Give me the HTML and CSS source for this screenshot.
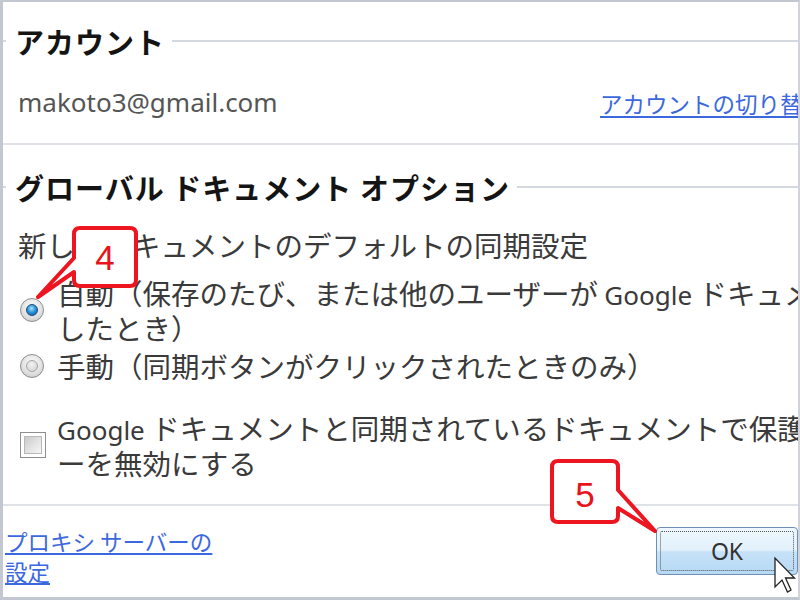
FILE: index.html
```html
<!DOCTYPE html>
<html lang="ja">
<head>
<meta charset="utf-8">
<title>オプション</title>
<link rel="stylesheet" href="styles.css">
</head>
<body>
<div class="frame">
  <div class="dialog">
    <section class="group">
      <h2 class="legend"><span class="legend-text">アカウント</span></h2>
      <div class="acct-row">
        <span class="email">makoto3@gmail.com</span>
        <a class="link" href="#">アカウントの切り替え</a>
      </div>
    </section>
    <hr class="divider">
    <section class="group">
      <h2 class="legend"><span class="legend-text">グローバル ドキュメント オプション</span></h2>
      <p class="desc">新しいドキュメントのデフォルトの同期設定</p>
      <div class="opt opt1"><span class="radio on"></span><span class="opt-text">自動（保存のたび、または他のユーザーが <span class="lat">Google</span> ドキュメントを編集<br>したとき）</span></div>
      <div class="opt opt2"><span class="radio"></span><span class="opt-text">手動（同期ボタンがクリックされたときのみ）</span></div>
      <div class="opt opt3"><span class="check"></span><span class="opt-text"><span class="lat">Google</span> ドキュメントと同期されているドキュメントで保護ビュ<br>ーを無効にする</span></div>
    </section>
    <hr class="divider">
    <footer class="foot">
      <a class="proxy" href="#">プロキシ サーバーの<br>設定</a>
      <button class="ok" type="button"><span class="ok-focus">OK</span></button>
    </footer>
  </div>
  <svg class="overlay" viewBox="0 0 800 600" width="800" height="600" aria-hidden="true">
    <path class="callout" d="M80,228 H130 Q136,228 136,234 V280 Q136,286 130,286 H80 Q74,286 74,280 V272 L38,297 L74,258 V234 Q74,228 80,228 Z"/>
    <text class="num" x="105" y="270">4</text>
    <path class="callout" d="M558,461 H612 Q618,461 618,467 V490 L655,531 L618,508 V516 Q618,522 612,522 H558 Q552,522 552,516 V467 Q552,461 558,461 Z"/>
    <text class="num" x="585" y="507">5</text>
    <polygon class="cursor" points="775,558 775,587 782,580 787.5,592 791,590 785.5,578 794.5,578"/>
  </svg>
</div>
</body>
</html>
```

FILE: styles.css
```css
html, body {
  margin: 0;
  padding: 0;
  background: #ffffff;
}

body {
  font-family: "Noto Sans CJK JP", "Noto Sans", sans-serif;
  color: #3a3a3a;
}

.frame {
  position: relative;
  width: 800px;
  height: 600px;
  box-sizing: border-box;
  border-top: 2px solid #c3c7d1;
  border-left: 3px solid #c3c7d1;
  border-bottom: 3px solid #c3c7d1;
  border-right: 2px solid #d0d3da;
  overflow: hidden;
  background: #ffffff;
}

.dialog {
  width: 795px;
  white-space: nowrap;
}

.legend {
  display: flex;
  align-items: center;
  margin: 21px 0 0;
  height: 36px;
  font-size: 29px;
  line-height: 36px;
  font-weight: 700;
  color: #141414;
  letter-spacing: 1px;
}

.legend::before {
  content: "";
  width: 3px;
  height: 2px;
  background: #d4d8df;
  margin-right: 9px;
  flex: none;
}

.legend::after {
  content: "";
  flex: 1;
  height: 2px;
  background: #d4d8df;
  margin-left: 7px;
}

.legend-text {
  flex: none;
}

.group:last-of-type .legend {
  margin-top: 24px;
}

.acct-row {
  display: grid;
  grid-template-columns: 582px auto;
  align-items: center;
  margin-top: 23px;
  height: 36px;
  padding-left: 15px;
}

.email {
  font-family: "Noto Sans", sans-serif;
  font-size: 26px;
  color: #555555;
  line-height: 36px;
}

.link {
  font-size: 22.5px;
  line-height: 36px;
  color: #3c68de;
  text-decoration: underline;
  text-underline-offset: 3px;
  padding-top: 3px;
}

.divider {
  margin: 25px 0 0;
  border: 0;
  height: 2px;
  background: #dfe2e7;
}

.desc {
  margin: 22px 0 0;
  padding-left: 15px;
  font-size: 28.5px;
  line-height: 35px;
  color: #3a3a3a;
}

.opt {
  display: flex;
  align-items: center;
  padding-left: 17px;
  gap: 13px;
  font-size: 28.5px;
  line-height: 35px;
}

.opt1 { margin-top: 13px; }
.opt2 { margin-top: 3px; }
.opt3 { margin-top: 27px; }

.lat {
  font-family: "Noto Sans", sans-serif;
  font-size: 26px;
  line-height: 1;
}

.radio {
  flex: none;
  width: 24px;
  height: 24px;
  box-sizing: border-box;
  border-radius: 50%;
  border: 1px solid #8c8c8c;
  background: radial-gradient(circle at 50% 35%, #fbfbfb 0, #e2e2e2 55%, #c4c4c4 100%);
  display: flex;
  align-items: center;
  justify-content: center;
}

.radio::after {
  content: "";
  width: 12px;
  height: 12px;
  box-sizing: border-box;
  border-radius: 50%;
  border: 1px solid #a6a6a6;
  background: radial-gradient(circle at 45% 35%, #f2f2f2 0, #cfcfcf 100%);
}

.radio.on::after {
  border-color: #1b4a7c;
  background: radial-gradient(circle at 45% 35%, #a8e6ff 0, #2f95dc 45%, #0f5696 100%);
}

.check {
  flex: none;
  width: 26px;
  height: 26px;
  box-sizing: border-box;
  border: 1px solid #8e8e8e;
  background: #ffffff;
  padding: 3px;
  margin-right: -2px;
}

.check::after {
  content: "";
  display: block;
  width: 100%;
  height: 100%;
  box-sizing: border-box;
  border: 1px solid #b9b9b9;
  background: linear-gradient(135deg, #c9c9c9 0%, #e4e4e4 55%, #f6f6f6 100%);
}

.group:last-of-type + .divider {
  margin-top: 24px;
}

.foot {
  display: flex;
  justify-content: space-between;
  align-items: flex-start;
  padding-top: 20px;
}

.proxy {
  padding-left: 2px;
  font-size: 22.5px;
  line-height: 30px;
  color: #3c68de;
  text-decoration: underline;
}

.ok {
  margin-top: 1px;
  width: 142px;
  height: 48px;
  padding: 3px;
  box-sizing: border-box;
  border: 1px solid #6f8fb6;
  border-radius: 4px;
  background: linear-gradient(#eef7fd 0%, #e2f1fc 48%, #c6e2f8 52%, #b6d9f4 100%);
  font-family: "Noto Sans", sans-serif;
  font-size: 23px;
  color: #333333;
}

.ok-focus {
  display: flex;
  align-items: center;
  justify-content: center;
  height: 100%;
  box-sizing: border-box;
  border: 1px dotted #555555;
  border-radius: 2px;
}

.overlay {
  position: absolute;
  left: -3px;
  top: -2px;
  width: 800px;
  height: 600px;
  pointer-events: none;
}

.callout {
  fill: #ffffff;
  stroke: #ec1520;
  stroke-width: 4;
  stroke-linejoin: round;
}

.num {
  font-family: "Liberation Sans", Arial, sans-serif;
  font-size: 35px;
  fill: #e8141c;
  text-anchor: middle;
}

.cursor {
  fill: #ffffff;
  stroke: #222222;
  stroke-width: 1.3;
  stroke-linejoin: miter;
}
```
